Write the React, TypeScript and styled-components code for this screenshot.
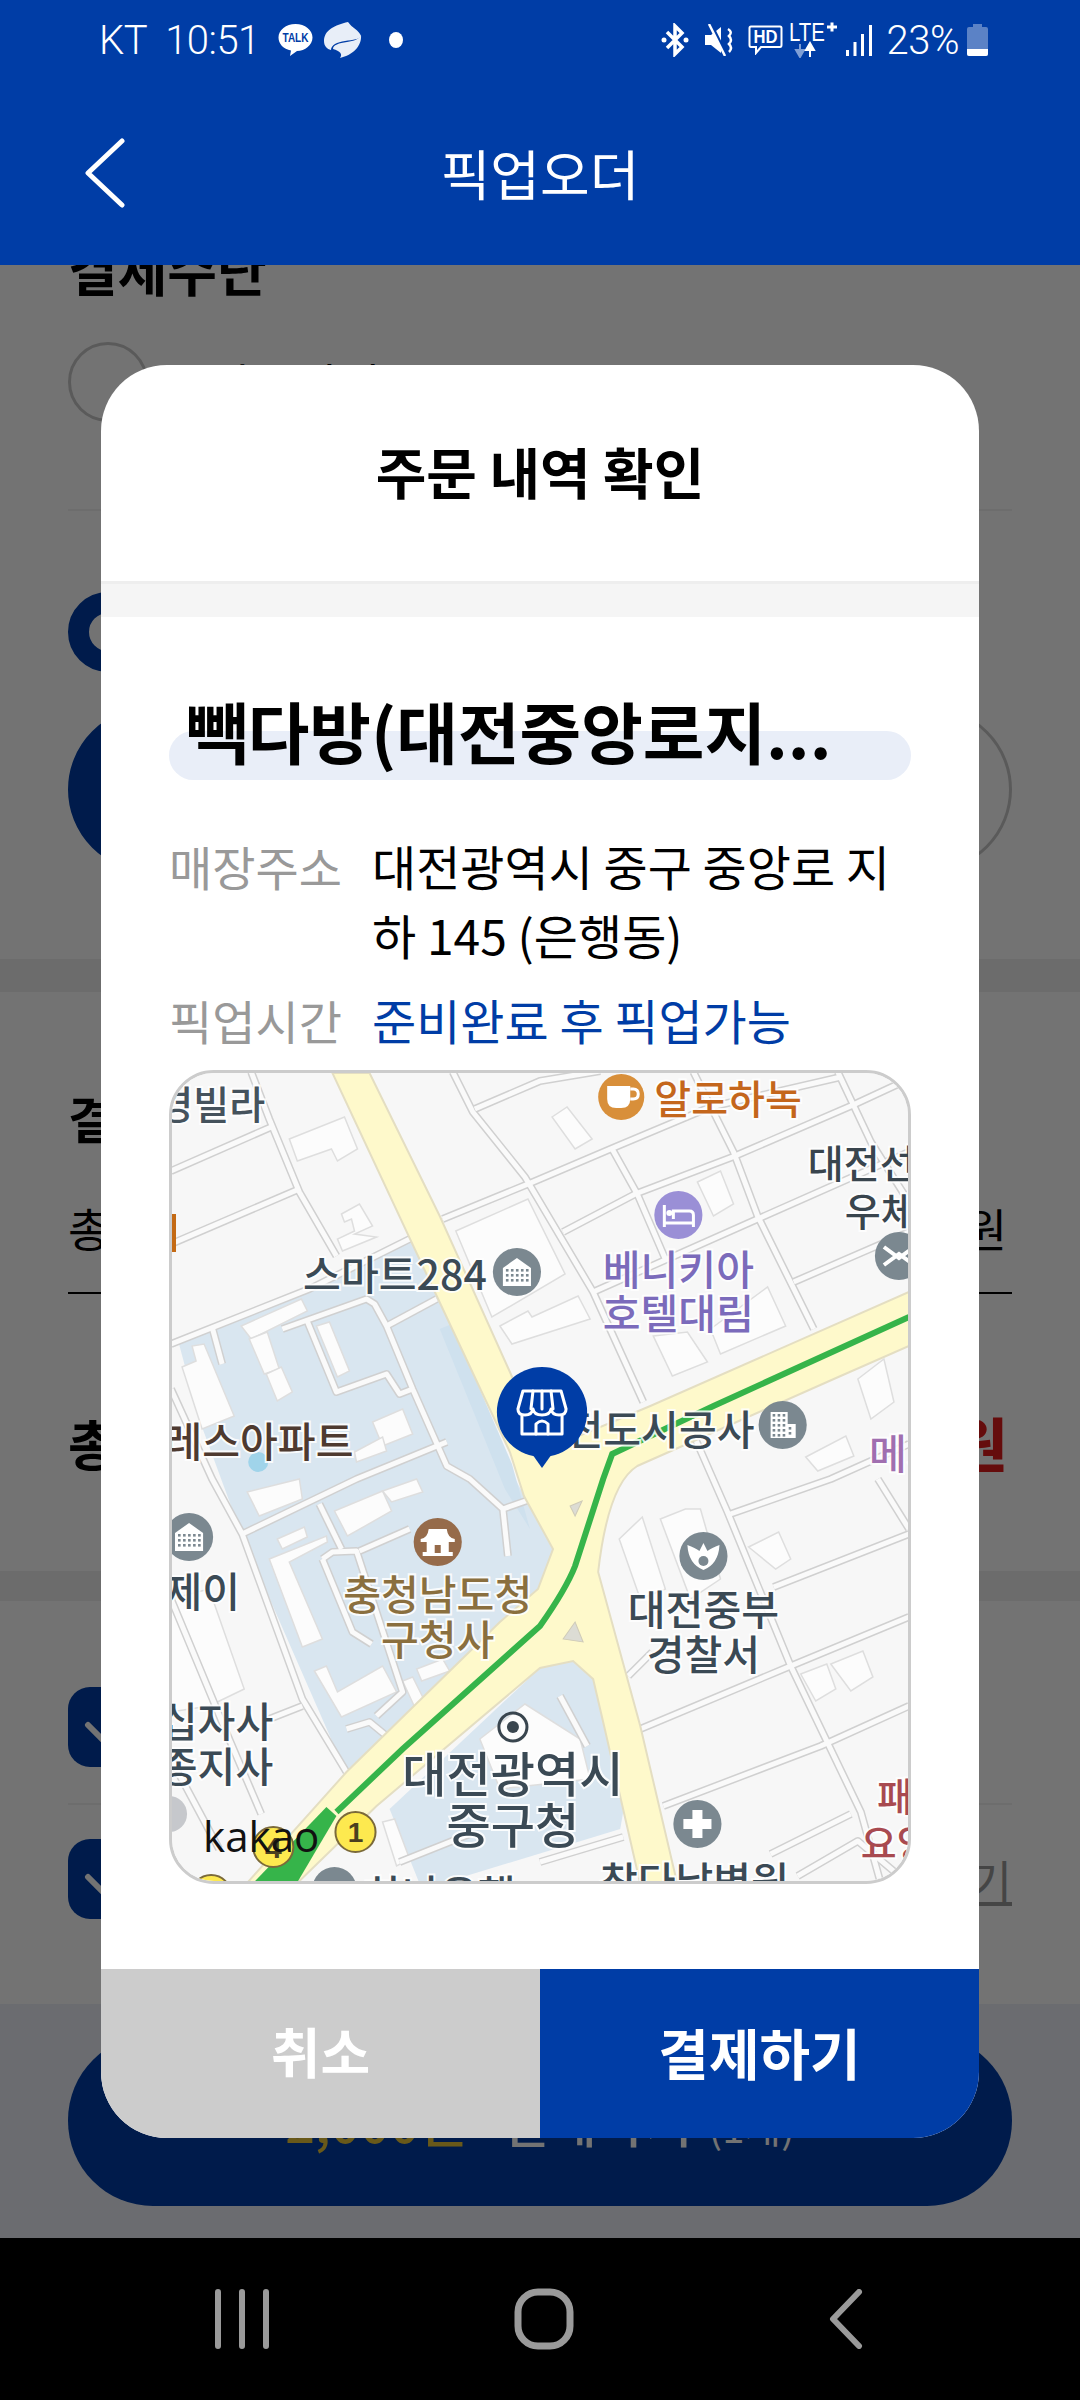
import styled, { createGlobalStyle } from 'styled-components';

const BLUE = '#003da6';
const FONT = '"Noto Sans CJK KR", "Noto Sans", sans-serif';

const GlobalStyle = createGlobalStyle`
  html, body {
    margin: 0;
    padding: 0;
    background: #000;
  }
  * {
    box-sizing: border-box;
  }
`;

const Screen = styled.div`
  width: 1080px;
  height: 2400px;
  display: flex;
  flex-direction: column;
  overflow: hidden;
  font-family: ${FONT};
  background: #fff;
`;

//Status bar
const StatusBar = styled.div`
  height: 80px;
  flex: none;
  background: ${BLUE};
  color: #fff;
  display: flex;
  justify-content: space-between;
  align-items: center;
  padding: 0 92px 0 99px;
  font-family: Roboto, sans-serif;
  font-size: 40px;
  font-weight: 300;
`;

const StatusGroup = styled.div`
  display: flex;
  align-items: center;
`;

const StatusText = styled.span<{ $after?: number }>`
  margin-right: ${(props) => props.$after ?? 0}px;
  letter-spacing: -0.5px;
`;

const StatusIcon = styled.svg<{ $after?: number }>`
  display: block;
  margin-right: ${(props) => props.$after ?? 0}px;
`;

const IconText = styled.text`
  font-family: 'Liberation Sans', sans-serif;
`;

//Header
const Header = styled.header`
  height: 185px;
  flex: none;
  background: ${BLUE};
  display: grid;
  grid-template-columns: 1fr auto 1fr;
  align-items: center;
  padding-left: 84px;
`;

const HeaderTitle = styled.h1`
  margin: 0 84px 0 0;
  color: #fff;
  font-size: 54px;
  font-weight: 400;
  line-height: 1;
`;

//Page behind the dialog
const Content = styled.div`
  position: relative;
  flex: 1;
  min-height: 0;
  overflow: hidden;
  display: flex;
  flex-direction: column;
  background: #fff;
`;

const ScrolledPage = styled.div`
  margin-top: -26px;
  flex: 1;
  display: flex;
  flex-direction: column;
`;

const Section = styled.section`
  padding: 0 68px;
`;

const SectionTitle = styled.h2`
  margin: 0;
  font-size: 54px;
  line-height: 60px;
  font-weight: 700;
  color: #000;
`;

const MethodRow = styled.div<{ $divided?: boolean }>`
  display: flex;
  align-items: center;
  gap: 62px;
  margin-top: 43px;
  padding-bottom: 87px;
  font-size: 46px;
  border-bottom: ${(props) => (props.$divided ? '2px solid #f2f2f2' : 'none')};
`;

const Radio = styled.span<{ $checked?: boolean }>`
  width: 80px;
  height: 80px;
  flex: none;
  border-radius: 50%;
  border: ${(props) =>
    props.$checked ? `21px solid ${BLUE}` : '3px solid #c8c8c8'};
`;

const SelectedRadio = styled(Radio)`
  display: block;
  margin-top: 81px;
`;

const CardRow = styled.div`
  display: flex;
  justify-content: space-between;
  margin-top: 35px;
  padding-bottom: 87px;
`;

const CardCircle = styled.span<{ $active?: boolean }>`
  width: 165px;
  height: 165px;
  border-radius: 50%;
  background: ${(props) => (props.$active ? BLUE : 'transparent')};
  border: 3px solid ${(props) => (props.$active ? BLUE : '#c8c8c8')};
`;

const Band = styled.div<{ $height: number }>`
  height: ${(props) => props.$height}px;
  background: #f0f0f0;
`;

const AmountSection = styled(Section)`
  padding-top: 95px;
`;

const AmountTitle = styled(SectionTitle)`
  font-size: 50px;
`;

const AmountRow = styled.div`
  display: flex;
  justify-content: space-between;
  align-items: center;
  height: 60px;
  margin: 50px 0 0;
  padding-right: 5px;
  font-size: 46px;
`;

const AmountRule = styled.div`
  height: 2px;
  margin-top: 35px;
  background: #000;
`;

const TotalRow = styled.div`
  display: flex;
  justify-content: space-between;
  align-items: center;
  height: 70px;
  margin-top: 113px;
  margin-bottom: 94px;
  padding-right: 5px;
  font-size: 54px;
  font-weight: 700;
`;

const TotalPrice = styled.span`
  color: #e01b1b;
  font-size: 58px;
  font-weight: 900;
`;

const AgreeSection = styled(Section)`
  padding-top: 86px;
  padding-bottom: 85px;
`;

const AgreeRow = styled.div`
  display: flex;
  justify-content: space-between;
  align-items: center;
  height: 80px;
  font-size: 46px;
`;

const AgreeRule = styled.div`
  height: 2px;
  margin: 36px 0 34px;
  background: #f2f2f2;
`;

const Checkbox = styled.span`
  width: 80px;
  height: 80px;
  border-radius: 22px;
  background: ${BLUE};
  display: flex;
  align-items: center;
  justify-content: center;
`;

const MoreLink = styled.span`
  color: #999;
  text-decoration: underline;
`;

const Footer = styled.div`
  flex: 1;
  padding: 31px 68px 0;
  background: #eef0f9;
`;

const PayButton = styled.div`
  height: 171px;
  border-radius: 85px;
  background: ${BLUE};
  display: flex;
  align-items: center;
  justify-content: center;
  gap: 34px;
  font-size: 52px;
  font-weight: 500;
  color: #fff;
`;

const PayAmount = styled.span`
  color: #e8c53a;
`;

const PayCount = styled.span`
  margin-left: 16px;
  font-size: 40px;
  font-weight: 400;
`;

//Dialog
const Scrim = styled.div`
  position: absolute;
  inset: 0;
  background: rgba(0, 0, 0, 0.55);
  display: flex;
  align-items: center;
  justify-content: center;
`;

const Modal = styled.div`
  width: 878px;
  height: 1773px;
  border-radius: 66px;
  overflow: hidden;
  background: #fff;
  display: flex;
  flex-direction: column;
`;

const ModalHead = styled.div`
  height: 219px;
  flex: none;
  display: flex;
  align-items: center;
  justify-content: center;
  border-bottom: 3px solid #eeeeee;
  padding-bottom: 6px;
  font-size: 55px;
  font-weight: 700;
  color: #000;
`;

const ModalGap = styled.div`
  height: 33px;
  flex: none;
  background: #f5f5f5;
`;

const ModalBody = styled.div`
  flex: 1;
  padding: 74px 68px 0;
`;

const StoreName = styled.div`
  position: relative;
  height: 89px;
  margin-bottom: 51px;
  padding: 0 17px;
  isolation: isolate;

  &::before {
    content: '';
    position: absolute;
    left: 0;
    right: 0;
    bottom: 0;
    height: 49px;
    border-radius: 25px;
    background: #e9eef8;
    z-index: -1;
  }
`;

const StoreText = styled.div`
  font-size: 67px;
  font-weight: 700;
  line-height: 78px;
  color: #000;
  white-space: nowrap;
`;

const InfoRow = styled.div`
  display: grid;
  grid-template-columns: 203px 1fr;
  margin-bottom: 16px;
  line-height: 69px;
`;

const InfoLabel = styled.span`
  color: #999;
  font-size: 47px;
`;

const InfoValue = styled.span<{ $accent?: boolean }>`
  color: ${(props) => (props.$accent ? BLUE : '#000')};
  font-size: 48px;
  word-break: break-all;
`;

const MapFrame = styled.div`
  height: 814px;
  margin-top: 0;
  border: 3px solid #cccccc;
  border-radius: 45px;
  overflow: hidden;
  background: #f7f7f7;
`;

const MapSvg = styled.svg`
  display: block;
  width: 100%;
  height: 100%;
`;

const MapLabel = styled.text`
  font-family: ${FONT};
  font-weight: 500;
  paint-order: stroke;
  stroke: rgba(255, 255, 255, 0.85);
  stroke-width: 4px;
  dominant-baseline: central;
`;

const KakaoMark = styled.text`
  font-family: 'Open Sans', sans-serif;
  font-size: 42px;
  fill: #111;
  dominant-baseline: central;
`;

const ButtonRow = styled.div`
  height: 169px;
  flex: none;
  display: grid;
  grid-template-columns: 1fr 1fr;
`;

const ModalButton = styled.button<{ $primary?: boolean }>`
  border: none;
  padding: 0 0 6px;
  background: ${(props) => (props.$primary ? BLUE : '#cccccc')};
  color: #fff;
  font-family: inherit;
  font-size: ${(props) => (props.$primary ? 55 : 54)}px;
  font-weight: 700;
`;

//Navigation bar
const NavBar = styled.nav`
  height: 162px;
  flex: none;
  background: #000;
  display: grid;
  grid-template-columns: repeat(3, 302px);
  padding-left: 91px;
  align-items: center;
  justify-items: center;
`;

//Map data, in page coordinates
const streets = [
  'M252 1073L270 1120L300 1193L337 1257',
  'M172 1172L272 1128',
  'M172 1245L300 1190',
  'M172 1345L310 1290L410 1240',
  'M443 1220L533 1183L615 1148L710 1108L840 1078',
  'M563 1233L635 1195L732 1158L850 1107L908 1080',
  'M593 1293L757 1220L908 1153',
  'M793 1283L908 1233',
  'M453 1073L473 1113L525 1178L593 1293L643 1403',
  'M612 1150L637 1195L665 1260',
  'M693 1073L733 1153L757 1217L813 1330',
  'M837 1073L870 1143L908 1203',
  'M475 1110L540 1082L600 1072',
  'M695 1440L727 1513L790 1667L860 1813L880 1885',
  'M877 1480L908 1530',
  'M730 1515L830 1480L908 1445',
  'M773 1588L908 1535',
  'M640 1730L790 1667L908 1618',
  'M663 1807L820 1747L908 1707',
  'M770 1855L850 1815',
  'M797 1877L857 1842L908 1885',
  'M540 1863L623 1838',
  'M628 1677L652 1653',
  'M283 1330L367 1300L375 1305L387 1327L413 1390L447 1467L470 1480L503 1510L508 1557',
  'M307 1320L337 1393L387 1375L400 1395L413 1390',
  'M387 1327L437 1300',
  'M213 1328L223 1365',
  'M447 1443L357 1480L243 1535',
  'M172 1390L213 1480L243 1535L303 1700L347 1773',
  'M320 1505L342 1550',
  'M360 1552L410 1530',
  'M503 1510L540 1497',
  'M323 1560L333 1553L357 1552L403 1693L377 1717',
  'M323 1560L353 1633L372 1645',
  'M347 1730L370 1723L387 1737',
  'M270 1720L303 1707',
  'M560 1697L587 1747',
  'M172 1600L230 1740L262 1815',
  'M172 1760L220 1850',
  'M400 1863L470 1835',
];

const blocks = [
  '290,1140 345,1118 358,1150 338,1162 332,1150 298,1162',
  '342,1215 360,1205 373,1227 355,1235 377,1238 343,1252 338,1240 355,1232 352,1220 345,1223',
  '456,1232 528,1200 565,1275 492,1318',
  '500,1327 528,1312 532,1318 578,1297 590,1320 512,1345',
  '653,1337 687,1333 707,1363 672,1377',
  '710,1330 767,1288 785,1327 720,1355',
  '552,1118 567,1108 592,1140 575,1150',
  '697,1183 720,1172 733,1205 713,1217',
  '857,1380 883,1360 893,1403 870,1420',
  '805,1458 845,1437 853,1457 817,1472',
  '242,1327 302,1300 308,1312 252,1340',
  '250,1340 268,1333 280,1370 265,1375',
  '267,1375 282,1368 293,1393 278,1402',
  '317,1327 330,1323 350,1372 338,1378',
  '183,1368 197,1362 193,1347 205,1345 235,1417 203,1430',
  '373,1423 403,1410 413,1435 383,1447',
  '355,1453 383,1438 387,1452 357,1463',
  '248,1493 300,1480 303,1500 260,1517',
  '335,1512 383,1492 392,1512 348,1537',
  '383,1492 417,1480 423,1493 392,1503',
  '270,1560 327,1537 328,1543 290,1563 323,1640 303,1648',
  '278,1540 305,1528 308,1538 283,1550',
  '315,1672 327,1667 338,1693 383,1667 397,1693 342,1718',
  '403,1682 413,1678 425,1702 415,1708',
  '417,1670 443,1660 450,1672 422,1682',
  '172,1600 210,1590 245,1690 210,1707 172,1713',
  '480,1740 525,1705 580,1740 590,1780 500,1790',
  '383,1823 395,1820 410,1860 397,1867',
  '619,1540 642,1518 665,1590 640,1600',
  '660,1520 685,1510 700,1510 720,1580 690,1600',
  '748,1548 778,1533 790,1560 775,1570',
  '800,1675 826,1665 835,1690 815,1702',
  '830,1665 862,1652 872,1678 850,1692',
];

const labels = [
  { text: '경빌라', x: 266, y: 1103, size: 39, fill: '#45525c', anchor: 'end' },
  { text: '알로하녹', x: 654, y: 1098, size: 40, fill: '#c4661c', anchor: 'start' },
  { text: '대전선', x: 807, y: 1162, size: 39, fill: '#39454e', anchor: 'start' },
  { text: '우체', x: 844, y: 1210, size: 39, fill: '#39454e', anchor: 'start' },
  { text: '스마트284', x: 487, y: 1273, size: 41, fill: '#3b4a55', anchor: 'end' },
  { text: '베니키아', x: 678, y: 1268, size: 41, fill: '#7b6bbb', anchor: 'middle' },
  { text: '호텔대림', x: 678, y: 1312, size: 41, fill: '#7b6bbb', anchor: 'middle' },
  { text: '레스아파트', x: 354, y: 1440, size: 41, fill: '#4e3a30', anchor: 'end' },
  { text: '대전도시공사', x: 754, y: 1428, size: 41, fill: '#3b4a55', anchor: 'end' },
  { text: '메가', x: 868, y: 1452, size: 41, fill: '#a06fb0', anchor: 'start' },
  { text: '제이', x: 241, y: 1590, size: 41, fill: '#3b4a55', anchor: 'end' },
  { text: '충청남도청', x: 438, y: 1593, size: 41, fill: '#8a6f3f', anchor: 'middle' },
  { text: '구청사', x: 438, y: 1638, size: 41, fill: '#8a6f3f', anchor: 'middle' },
  { text: '십자사', x: 274, y: 1720, size: 41, fill: '#3b4a55', anchor: 'end' },
  { text: '종지사', x: 274, y: 1765, size: 41, fill: '#3b4a55', anchor: 'end' },
  { text: '대전광역시', x: 513, y: 1772, size: 48, fill: '#3b4a55', anchor: 'middle' },
  { text: '중구청', x: 513, y: 1823, size: 48, fill: '#3b4a55', anchor: 'middle' },
  { text: '대전중부', x: 703, y: 1608, size: 41, fill: '#3b4a55', anchor: 'middle' },
  { text: '경찰서', x: 703, y: 1653, size: 41, fill: '#3b4a55', anchor: 'middle' },
  { text: '패', x: 876, y: 1795, size: 39, fill: '#a84a50', anchor: 'start' },
  { text: '요양', x: 860, y: 1842, size: 39, fill: '#a84a50', anchor: 'start' },
  { text: '참다날병원', x: 694, y: 1880, size: 41, fill: '#3b4a55', anchor: 'middle' },
  { text: '하나은행', x: 365, y: 1893, size: 41, fill: '#3b4a55', anchor: 'start' },
];

const Windows = ({ x, y, cols, rows }: { x: number; y: number; cols: number; rows: number }) => (
  <g fill='#7b8890'>
    {Array.from({ length: cols * rows }, (_, i) => (
      <rect
        key={i}
        x={x + (i % cols) * 5}
        y={y + Math.floor(i / cols) * 5}
        width='2.6'
        height='2.6'
      />
    ))}
  </g>
);

const BuildingPoi = ({ x, y }: { x: number; y: number }) => (
  <g transform={`translate(${x} ${y})`}>
    <circle r='24' fill='#7b8890' />
    <path d='M-14 -4L0 -14L14 -4V14H-14Z' fill='#fff' />
    <Windows x={-11} y={-3} cols={5} rows={3} />
  </g>
);

const OfficePoi = ({ x, y }: { x: number; y: number }) => (
  <g transform={`translate(${x} ${y})`}>
    <circle r='24' fill='#7b8890' />
    <path d='M-12 -13H5V-1H13V13H-12Z' fill='#fff' />
    <Windows x={-10} y={-11} cols={3} rows={5} />
    <Windows x={6} y={2} cols={1} rows={2} />
  </g>
);

const MapPicture = () => (
  <MapSvg viewBox='173 1074 734 808' preserveAspectRatio='none'>
    <rect x='170' y='1070' width='740' height='820' fill='#f7f7f7' />

    <polygon
      points='180,1345 215,1325 310,1292 412,1243 440,1300 510,1470 555,1555 535,1615 347,1775 243,1537 222,1480 200,1420'
      fill='#d9e6f0'
    />
    <polygon
      points='573,1662 593,1680 603,1723 623,1813 620,1830 440,1885 420,1885 390,1810 540,1669'
      fill='#d9e6f0'
    />
    <polygon points='440,1330 452,1325 512,1465 530,1530 505,1490' fill='#cfe1ee' />

    <g fill='#fcfcfc' stroke='#dedede' strokeWidth='1.5'>
      {blocks.map((points) => (
        <polygon key={points} points={points} />
      ))}
    </g>

    <g fill='none' stroke='#d0d0d0' strokeWidth='8' strokeLinejoin='round'>
      {streets.map((d) => (
        <path key={d} d={d} />
      ))}
    </g>
    <g fill='none' stroke='#fafafa' strokeWidth='5' strokeLinejoin='round'>
      {streets.map((d) => (
        <path key={d} d={d} />
      ))}
    </g>

    <path
      d='M333 1074L370 1074L440 1217L510 1373L535 1430L560 1445L650 1407L908 1293V1347L833 1380L637 1467Q608 1485 598 1573L640 1727L677 1885H640L603 1723L593 1680L573 1662L540 1669L377 1807L297 1885H247L347 1773L500 1623L538 1590L553 1550L524 1497L510 1453L437 1297Z'
      fill='#fef9cb'
      stroke='#e4dec2'
      strokeWidth='2'
    />
    <polygon points='570,1507 582,1502 575,1517' fill='#dcdcd4' stroke='#cfcbb8' />
    <polygon points='563,1640 575,1623 583,1643' fill='#dcdcd4' stroke='#cfcbb8' />

    <path
      d='M908 1318L713 1407L612 1455L603 1480L575 1567Q566 1590 540 1627L403 1750L337 1813'
      fill='none'
      stroke='#36b44a'
      strokeWidth='6'
    />
    <polygon points='327,1808 337,1817 297,1885 253,1885' fill='#36b44a' />

    <polygon points='172,1215 177,1215 177,1253 172,1253' fill='#c46a14' />
    <circle cx='259' cy='1463' r='10' fill='#a0d4ea' />
    <circle cx='170' cy='1815' r='18' fill='#c6c8cc' />

    {labels.map((label) => (
      <MapLabel
        key={label.text}
        x={label.x}
        y={label.y}
        fontSize={label.size}
        fill={label.fill}
        textAnchor={label.anchor as 'start' | 'middle' | 'end'}
      >
        {label.text}
      </MapLabel>
    ))}

    <g transform='translate(621 1098)'>
      <circle r='23' fill='#d88f3a' />
      <path d='M-14 -11H9V2Q9 11 0 11H-5Q-14 11 -14 2Z' fill='#fff' />
      <path d='M9 -8H12Q17 -8 17 -3Q17 2 12 2H9' fill='none' stroke='#fff' strokeWidth='3' />
    </g>

    <g transform='translate(678 1216)'>
      <circle r='24' fill='#9a8fd6' />
      <path d='M-14 -10V12M-14 8H15M15 12V0Q15 -4 11 -4H-5V4' fill='none' stroke='#fff' strokeWidth='3' />
      <circle cx='-9' cy='-2' r='3' fill='#fff' />
    </g>

    <BuildingPoi x={517} y={1273} />
    <BuildingPoi x={190} y={1538} />
    <OfficePoi x={782} y={1426} />

    <g transform='translate(898 1257)'>
      <circle r='24' fill='#7b8890' />
      <path d='M-15 -9L0 2L15 -9M-15 9L0 -2L15 9' fill='none' stroke='#fff' strokeWidth='4' />
    </g>

    <g transform='translate(438 1543)'>
      <circle r='24' fill='#966b4a' />
      <path d='M-17 -3Q-10 -4 -9 -13H9Q10 -4 17 -3V0H-17Z' fill='#fff' />
      <rect x='-11' y='0' width='22' height='10' fill='#fff' />
      <rect x='-15' y='10' width='30' height='4' fill='#fff' />
      <rect x='-3' y='3' width='6' height='8' fill='#966b4a' />
    </g>

    <g transform='translate(703 1557)'>
      <circle r='24' fill='#7b8890' />
      <path d='M-16 -11Q-8 -8 -4 -5L0 -13L4 -5Q8 -8 16 -11Q15 8 0 14Q-15 8 -16 -11Z' fill='#fff' />
      <circle cy='5' r='5' fill='#7b8890' />
    </g>

    <g transform='translate(697 1825)'>
      <circle r='24' fill='#7b8890' />
      <path d='M-5 -14H5V-5H14V5H5V14H-5V5H-14V-5H-5Z' fill='#fff' />
    </g>

    <circle cx='335' cy='1890' r='22' fill='#7b8890' />

    <circle cx='513' cy='1728' r='14' fill='none' stroke='#39454e' strokeWidth='3' />
    <circle cx='513' cy='1728' r='6' fill='#39454e' />

    <circle cx='274' cy='1848' r='20' fill='#fde94f' stroke='#7b6a3a' strokeWidth='2' />
    <IconText x='274' y='1859' fontSize='30' fontWeight='700' textAnchor='middle' fill='#4a4020'>
      4
    </IconText>
    <circle cx='356' cy='1833' r='20' fill='#fde94f' stroke='#7b6a3a' strokeWidth='2' />
    <IconText x='356' y='1843' fontSize='28' fontWeight='700' textAnchor='middle' fill='#4a4020'>
      1
    </IconText>
    <circle cx='212' cy='1896' r='20' fill='#fde94f' stroke='#7b6a3a' strokeWidth='2' />

    <KakaoMark x='204' y='1837'>
      kakao
    </KakaoMark>

    <circle cx='542' cy='1413' r='45' fill={BLUE} />
    <path d='M530 1452H554L542 1469Z' fill={BLUE} />
    <g fill='none' stroke='#fff' strokeWidth='3' strokeLinejoin='round' strokeLinecap='round'>
      <path d='M523 1392H561L566 1410Q566 1416 559 1416Q552 1416 551 1410Q550 1416 542 1416Q534 1416 533 1410Q532 1416 525 1416Q518 1416 518 1410Z' />
      <path d='M533 1392L531 1410M551 1392L553 1410M542 1392V1410' />
      <path d='M522 1417V1435H562V1417' />
      <path d='M536 1435V1425Q542 1419 548 1425V1435' />
    </g>
  </MapSvg>
);

export default function App() {
  return (
    <Screen>
      <GlobalStyle />
      <StatusBar>
        <StatusGroup>
          <StatusText $after={18}>KT</StatusText>
          <StatusText $after={18}>10:51</StatusText>
          <StatusIcon $after={10} width='35' height='34' viewBox='0 0 35 34'>
            <path d='M17.5 1C27 1 34.5 7 34.5 14.5C34.5 22 27 28 19 28L12 33L13 27.5C5.5 26 0.5 21 0.5 14.5C0.5 7 8 1 17.5 1Z' fill='#fff' />
            <IconText x='17.5' y='19' fontSize='12' fontWeight='700' textAnchor='middle' textLength='26' lengthAdjust='spacingAndGlyphs' fill={BLUE}>
              TALK
            </IconText>
          </StatusIcon>
          <StatusIcon $after={27} width='39' height='36' viewBox='0 0 39 36'>
            <path d='M25 0C12 3 1 8 1 19C1 24 4 27 8 28C8 23 14 20 22 19C30 18 37 17 38 14C36 8 29 6 25 0Z' fill='#e8eef8' />
            <path d='M38 13C39 24 30 33 17 36C20 32 17 29 10 27C10 23 16 21 24 20C31 19 36 17 38 13Z' fill='#e8eef8' />
          </StatusIcon>
          <StatusIcon width='14' height='16' viewBox='0 0 14 16'>
            <ellipse cx='7' cy='8' rx='7' ry='8' fill='#fff' />
          </StatusIcon>
        </StatusGroup>
        <StatusGroup>
          <StatusIcon $after={16} width='28' height='34' viewBox='0 0 28 34'>
            <path d='M6 9L21 24L14 31V3L21 10L6 25' fill='none' stroke='#fff' strokeWidth='3.5' />
            <circle cx='3' cy='17' r='2.5' fill='#fff' />
            <circle cx='25' cy='17' r='2.5' fill='#fff' />
          </StatusIcon>
          <StatusIcon $after={12} width='31' height='32' viewBox='0 0 31 32'>
            <path d='M0 11H6L16 3V29L6 21H0Z' fill='#fff' />
            <path d='M6 0L22 32' stroke={BLUE} strokeWidth='3' />
            <path d='M4 0L20 32' stroke='#fff' strokeWidth='2.5' />
            <path d='M23 5Q28 8 24 12Q28 16 24 20Q28 24 24 28' fill='none' stroke='#fff' strokeWidth='2.5' />
          </StatusIcon>
          <StatusIcon $after={6} width='35' height='30' viewBox='0 0 35 30'>
            <path d='M3 1.5H32Q33.5 1.5 33.5 3V20Q33.5 22 32 22H13L8 28V22H3Q1.5 22 1.5 20V3Q1.5 1.5 3 1.5Z' fill='none' stroke='#fff' strokeWidth='2' />
            <IconText x='17.5' y='18' fontSize='18' fontWeight='700' textAnchor='middle' textLength='24' lengthAdjust='spacingAndGlyphs' fill='#fff'>
              HD
            </IconText>
          </StatusIcon>
          <StatusIcon $after={8} width='49' height='36' viewBox='0 0 49 36'>
            <IconText x='0' y='19' fontSize='25' textLength='36' lengthAdjust='spacingAndGlyphs' fill='#fff'>
              LTE
            </IconText>
            <path d='M38 5H48M43 0.5V9.5' stroke='#fff' strokeWidth='3' />
            <path d='M11 22V29M7 28H15L11 35Z' stroke='#7f9fd6' strokeWidth='2' fill='#7f9fd6' />
            <path d='M21 35V27M17 28H25L21 21Z' stroke='#fff' strokeWidth='2' fill='#fff' />
          </StatusIcon>
          <StatusIcon $after={15} width='26' height='32' viewBox='0 0 26 32'>
            <rect x='0' y='26' width='3' height='6' fill='#fff' />
            <rect x='7.5' y='18' width='3' height='14' fill='#fff' />
            <rect x='15' y='10' width='3' height='22' fill='#fff' />
            <rect x='23' y='1' width='3' height='31' fill='#fff' />
          </StatusIcon>
          <StatusText $after={8}>23%</StatusText>
          <StatusIcon width='21' height='32' viewBox='0 0 21 32'>
            <path d='M6 0H15V3H19Q21 3 21 5V30Q21 32 19 32H2Q0 32 0 30V5Q0 3 2 3H6Z' fill='#5b82c6' />
            <path d='M0 25H21V30Q21 32 19 32H2Q0 32 0 30Z' fill='#fff' />
          </StatusIcon>
        </StatusGroup>
      </StatusBar>

      <Header>
        <svg width='42' height='70' viewBox='0 0 42 70'>
          <path d='M38 3L4 35L38 67' fill='none' stroke='#fff' strokeWidth='5' strokeLinecap='round' strokeLinejoin='round' />
        </svg>
        <HeaderTitle>픽업오더</HeaderTitle>
      </Header>

      <Content>
        <ScrolledPage>
          <Section>
            <SectionTitle>결제수단</SectionTitle>
            <MethodRow $divided>
              <Radio />
              카드결제
            </MethodRow>
            <SelectedRadio $checked />
            <CardRow>
              <CardCircle $active />
              <CardCircle />
            </CardRow>
          </Section>
          <Band $height={33} />
          <AmountSection>
            <AmountTitle>결제 금액</AmountTitle>
            <AmountRow>
              <span>총 주문금액</span>
              <span>2,000원</span>
            </AmountRow>
            <AmountRule />
            <TotalRow>
              <span>총 결제금액</span>
              <TotalPrice>2,000원</TotalPrice>
            </TotalRow>
          </AmountSection>
          <Band $height={30} />
          <AgreeSection>
            <AgreeRow>
              <Checkbox>
                <svg width='48' height='36' viewBox='0 0 48 36'>
                  <path d='M4 16L18 30L44 4' fill='none' stroke='#fff' strokeWidth='6' strokeLinecap='round' />
                </svg>
              </Checkbox>
            </AgreeRow>
            <AgreeRule />
            <AgreeRow>
              <Checkbox>
                <svg width='48' height='36' viewBox='0 0 48 36'>
                  <path d='M4 16L18 30L44 4' fill='none' stroke='#fff' strokeWidth='6' strokeLinecap='round' />
                </svg>
              </Checkbox>
              <MoreLink>보기</MoreLink>
            </AgreeRow>
          </AgreeSection>
          <Footer>
            <PayButton>
              <PayAmount>2,000원</PayAmount>
              <span>
                결제하기<PayCount>(1개)</PayCount>
              </span>
            </PayButton>
          </Footer>
        </ScrolledPage>

        <Scrim>
          <Modal>
            <ModalHead>주문 내역 확인</ModalHead>
            <ModalGap />
            <ModalBody>
              <StoreName>
                <StoreText>빽다방(대전중앙로지...</StoreText>
              </StoreName>
              <InfoRow>
                <InfoLabel>매장주소</InfoLabel>
                <InfoValue>대전광역시 중구 중앙로 지하 145 (은행동)</InfoValue>
              </InfoRow>
              <InfoRow>
                <InfoLabel>픽업시간</InfoLabel>
                <InfoValue $accent>준비완료 후 픽업가능</InfoValue>
              </InfoRow>
              <MapFrame>
                <MapPicture />
              </MapFrame>
            </ModalBody>
            <ButtonRow>
              <ModalButton>취소</ModalButton>
              <ModalButton $primary>결제하기</ModalButton>
            </ButtonRow>
          </Modal>
        </Scrim>
      </Content>

      <NavBar>
        <svg width='54' height='60' viewBox='0 0 54 60'>
          <path d='M3 3V57M27 3V57M51 3V57' stroke='#9a9a9a' strokeWidth='6' strokeLinecap='round' />
        </svg>
        <svg width='62' height='62' viewBox='0 0 62 62'>
          <rect x='5' y='4' width='52' height='54' rx='20' fill='none' stroke='#9a9a9a' strokeWidth='7' />
        </svg>
        <svg width='36' height='60' viewBox='0 0 36 60'>
          <path d='M31 3L5 30L31 57' fill='none' stroke='#9a9a9a' strokeWidth='6' strokeLinecap='round' strokeLinejoin='round' />
        </svg>
      </NavBar>
    </Screen>
  );
}
